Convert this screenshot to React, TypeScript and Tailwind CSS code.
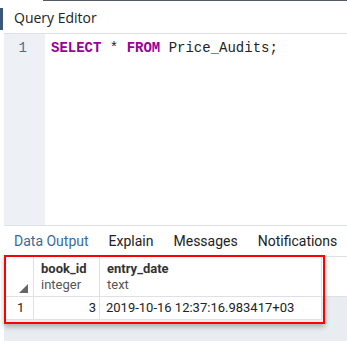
import React from "react";

const tabs = ["Data Output", "Explain", "Messages", "Notifications"];

export default function App() {
  return (
    <div className="w-[347px] h-[341px] bg-white overflow-hidden flex font-['Roboto',sans-serif] text-[#222]">
      {/* left strip with the active marker */}
      <div className="w-[4px] shrink-0">
        <div className="mt-[8px] h-[22px] w-[3px] bg-[#3b5877]" />
      </div>

      <div className="flex-1 flex flex-col min-w-0">
        <div className="flex h-px shrink-0">
          <div className="w-[39px]" />
          <div className="flex-1 bg-[#515a66]" />
        </div>

        <div className="h-[33px] shrink-0 border-b border-[#dde0e5] flex items-center pl-[10px] text-[14px] font-['Open_Sans',sans-serif] text-[#222]">
          Query Editor
        </div>

        {/* editor */}
        <div className="h-[191px] shrink-0 flex">
          <div className="w-[41px] bg-[#edf0f4] pt-[5px] pr-[18px] text-right font-['Liberation_Mono',monospace] text-[14px] leading-[18px] text-[#4b6a8c]">
            1
          </div>
          <div className="pl-[6px] pt-[5px] font-['Liberation_Mono',monospace] text-[14px] leading-[18px] whitespace-pre text-[#222]">
            <span className="text-[#990099] font-bold">SELECT</span>
            {" * "}
            <span className="text-[#990099] font-bold">FROM</span>
            {" Price_Audits;"}
          </div>
        </div>

        {/* output panel */}
        <div className="flex-1 flex flex-col border-t border-[#dde0e5]">
          <div className="h-[31px] shrink-0 border-b border-[#dde0e5] flex items-center pl-[10px] gap-[20px] text-[14px]">
            {tabs.map((t, i) => (
              <span key={t} className={i === 0 ? "text-[#3a6b97]" : "text-[#222]"}>
                {t}
              </span>
            ))}
          </div>

          <div className="relative flex-1 bg-[#e9ecf0]">
            <div className="bg-white h-[40px] flex border-b border-[#dde1e6] text-[13px]">
              <div className="w-[30px] border-r border-[#dde1e6] flex items-end justify-end pr-[5px] pb-[3px]">
                <svg width="9" height="9" viewBox="0 0 9 9">
                  <polygon points="9,0 9,9 0,9" fill="#666" />
                </svg>
              </div>
              <div className="w-[66px] border-r border-[#dde1e6] pl-[7px] pt-[4px] leading-[16px]">
                <div className="font-bold text-[#333]">book_id</div>
                <div className="text-[#555]">integer</div>
              </div>
              <div className="w-[222px] border-r border-[#dde1e6] pl-[7px] pt-[4px] leading-[16px]">
                <div className="font-bold text-[#333]">entry_date</div>
                <div className="text-[#555]">text</div>
              </div>
            </div>
            <div className="h-[23px] flex text-[13px] leading-[22px] text-[#222]">
              <div className="w-[30px] bg-white border-r border-b border-[#dde1e6] pl-[13px]">1</div>
              <div className="w-[66px] bg-white border-r border-b border-[#dde1e6] text-right pr-[3px]">3</div>
              <div className="w-[222px] bg-white border-r border-b border-[#dde1e6] pl-[6px]">
                2019-10-16 12:37:16.983417+03
              </div>
            </div>

            {/* highlight annotation */}
            <div className="absolute left-0 top-[-2px] w-[321px] h-[69px] border-2 border-[#ff0000] shadow-[0_3px_5px_rgba(0,0,0,0.25)]" />
          </div>
        </div>
      </div>
    </div>
  );
}
